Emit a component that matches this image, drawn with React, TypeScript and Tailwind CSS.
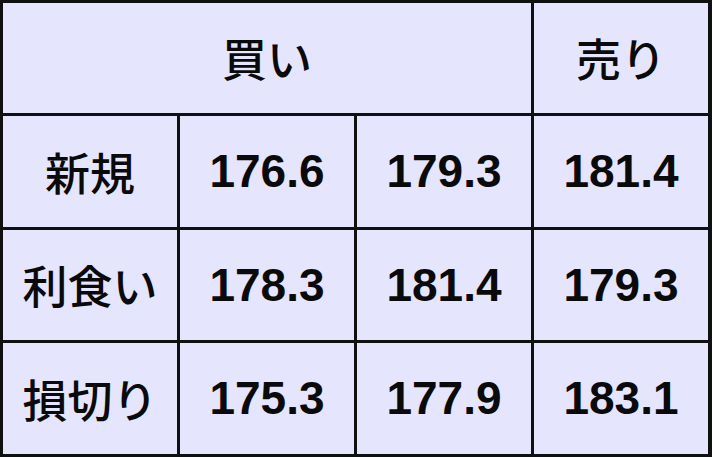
import { Fragment } from 'react';

const rows = [
  { label: '新規', values: ['176.6', '179.3', '181.4'] },
  { label: '利食い', values: ['178.3', '181.4', '179.3'] },
  { label: '損切り', values: ['175.3', '177.9', '183.1'] },
];

const jp = "font-['Noto_Sans_CJK_JP',sans-serif] text-[45px] font-medium";
const num = "font-['Liberation_Sans',Arial,sans-serif] text-[46px] font-bold";

export default function App() {
  return (
    <div className="w-[712px] h-[457px] bg-[#101010] p-[3px] grid grid-cols-[174px_174px_174px_174px] grid-rows-[110px_111px_110px_111px] gap-[3px] text-[#0a0a0a]">
      {/* header */}
      <div className={`col-span-3 bg-[#e5e5fd] flex items-center justify-center ${jp}`}>買い</div>
      <div className={`bg-[#e5e5fd] flex items-center justify-center ${jp}`}>売り</div>

      {rows.map((r) => (
        <Fragment key={r.label}>
          <div className={`bg-[#e5e5fd] flex items-center justify-center ${jp}`}>{r.label}</div>
          {r.values.map((v, i) => (
            <div key={i} className={`bg-[#e5e5fd] flex items-center justify-center ${num}`}>
              {v}
            </div>
          ))}
        </Fragment>
      ))}
    </div>
  );
}
